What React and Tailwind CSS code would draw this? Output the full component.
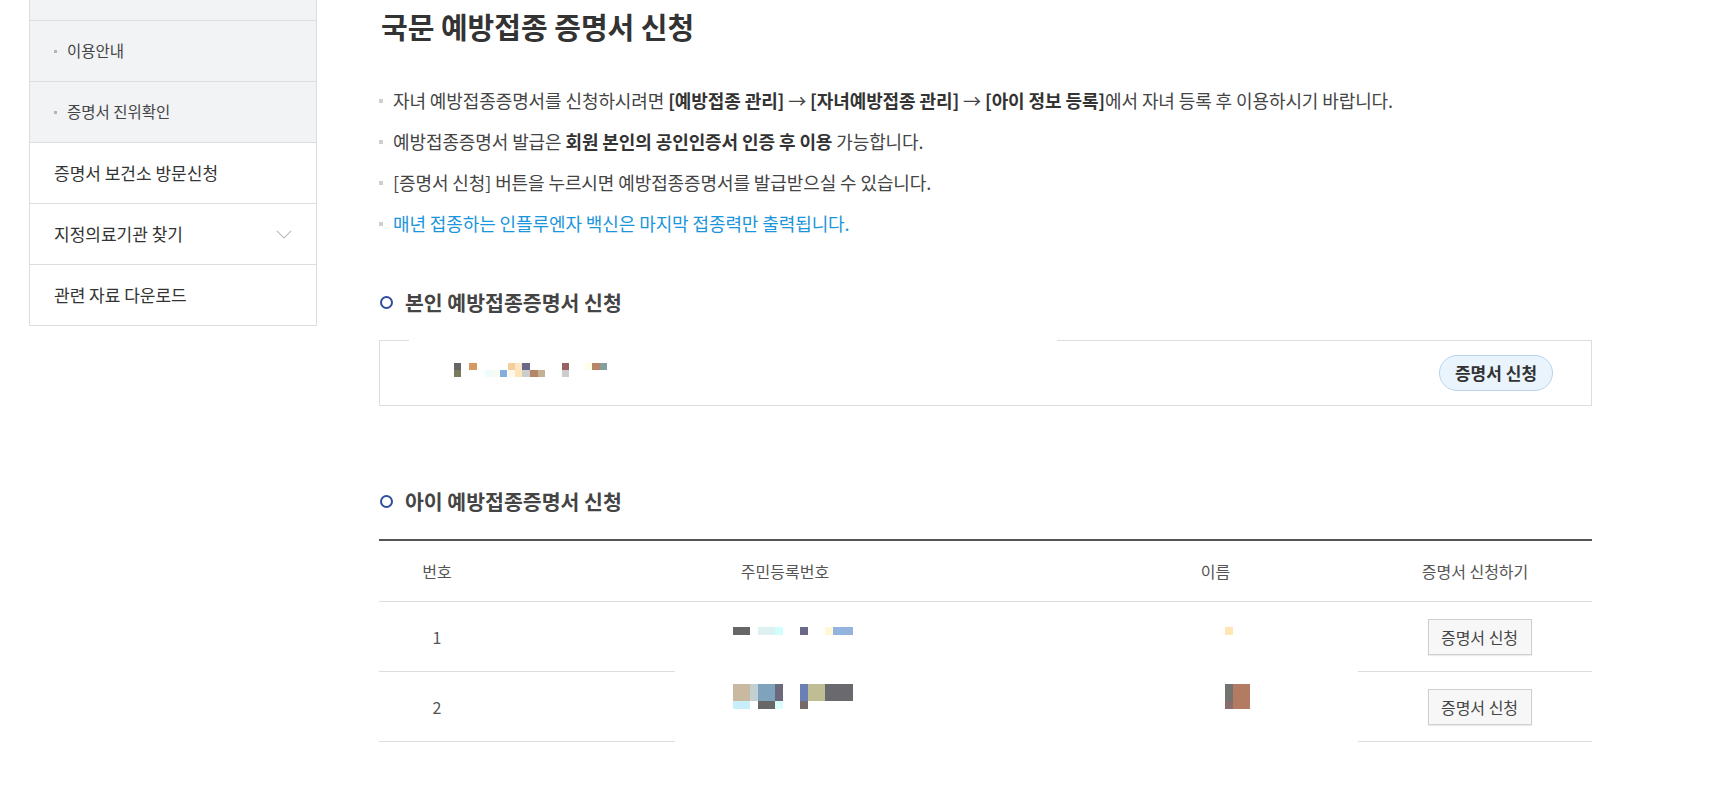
import React from 'react';

const boxCells = [
  [0, 0, 7, 7, '#666666'], [0, 7, 7, 7, '#7a7a5e'],
  [15.3, 0, 7.4, 7, '#d4995f'],
  [31, 7, 7.3, 7, '#effcfc'], [38.3, 7, 7, 7, '#f8fbf2'],
  [46, 7, 6.7, 7, '#84aedb'],
  [53.7, 0, 7, 7, '#f5cf9a'], [53.7, 7, 7, 7, '#fff6ee'],
  [60.7, 0, 7.6, 7, '#fde5c8'], [60.7, 7, 7.6, 7, '#fde5b8'],
  [68.3, 0, 7.7, 7, '#6a6a88'], [68.3, 7, 7.7, 7, '#cccccc'],
  [76, 7, 7.7, 7, '#b58668'], [83.7, 7, 7.6, 7, '#c2b294'],
  [107.7, 0, 7, 7, '#9a6363'], [107.7, 7, 7, 7, '#cccccc'],
  [131, 0, 7, 7, '#fffce8'], [138, 0, 7.7, 7, '#b58668'], [145.7, 0, 7, 7, '#859f9f'],
];

const row1Cells = [
  [0, 0, 17.3, 8, '#666666'], [25, 0, 17.3, 8, '#dff0f0'], [42.3, 0, 7.7, 8, '#d0fdfd'],
  [67.3, 0, 7.7, 8, '#6a6a88'], [92.3, 0, 7.7, 8, '#fff7d6'], [100, 0, 20, 8, '#93b4df'],
];

const row2Cells = [
  [0, 0, 17.3, 16.7, '#c9b9a0'], [17.3, 0, 7.7, 16.7, '#c2d0d3'], [25, 0, 17.3, 16.7, '#7fa2bd'],
  [42.3, 0, 7.7, 16.7, '#6a6a7c'], [67.3, 0, 7.7, 16.7, '#6a80b5'], [75, 0, 17.3, 16.7, '#bfbd94'],
  [92.3, 0, 27.7, 16.7, '#6a6a6e'],
  [0, 16.7, 17.3, 8.3, '#c8eefa'], [25, 16.7, 17.3, 8.3, '#676767'], [42.3, 16.7, 7.7, 8.3, '#dcfcfc'],
  [67.3, 16.7, 7.7, 8.3, '#766a6a'],
];

const name1Cells = [[0, 0, 7.7, 8, '#ffe6b3']];
const name2Cells = [
  [0, 0, 7.7, 16.7, '#75736f'], [0, 16.7, 7.7, 8.3, '#8a6e6e'], [7.7, 0, 17.3, 25, '#b47b63'],
];

function Mosaic({ cells, w, h }) {
  return (
    <svg width={w} height={h} viewBox={`0 0 ${w} ${h}`} shapeRendering="crispEdges" className="block">
      {cells.map(([x, y, cw, ch, c], i) => (
        <rect key={i} x={x} y={y} width={cw} height={ch} fill={c} />
      ))}
    </svg>
  );
}

function SubItem({ label }) {
  return (
    <div className="h-[61px] border-b border-[#dddddd] bg-[#f2f3f5] flex items-center pl-[24px]">
      <span className="w-[3px] h-[3px] bg-[#b5b5b5] mr-[10px]"></span>
      <span className="text-[15.5px] text-[#444]">{label}</span>
    </div>
  );
}

function MenuItem({ label, arrow }) {
  return (
    <div className="h-[61px] border-b border-[#dddddd] flex items-center justify-between pl-[24px] pr-[24px]">
      <span className="text-[17px] text-[#333]">{label}</span>
      {arrow && (
        <svg width="16" height="9" viewBox="0 0 16 9" fill="none">
          <polyline points="0.8,0.8 8,8 15.2,0.8" stroke="#bdbdbd" strokeWidth="1.2" />
        </svg>
      )}
    </div>
  );
}

function Bullet({ children, className = '' }) {
  return (
    <li className={`flex items-center ${className}`}>
      <span className="w-[4px] h-[4px] bg-[#cfcfcf] mr-[10px] shrink-0"></span>
      <span>{children}</span>
    </li>
  );
}

function SectionTitle({ children }) {
  return (
    <h3 className="flex items-center h-[30px] text-[20.5px] font-bold text-[#444]">
      <span className="w-[13px] h-[13px] rounded-full border-2 border-[#2c4e9c] mr-[12px] ml-[1px]"></span>
      {children}
    </h3>
  );
}

function SmallButton() {
  return (
    <button className="w-[104px] h-[36px] border border-[#cfcfcf] bg-[#f7f7f7] shadow-[0_1px_1px_rgba(0,0,0,0.08)] text-[16px] text-[#444]">
      증명서 신청
    </button>
  );
}

export default function App() {
  return (
    <div className="w-full min-h-[810px] bg-white flex font-['Noto_Sans_CJK_KR','Noto_Sans',sans-serif]">
      {/* 좌측 메뉴 */}
      <aside className="ml-[29px] w-[288px] shrink-0 self-start border-l border-r border-[#dddddd]">
        <div className="h-[21px] border-b border-[#dddddd] bg-[#f2f3f5]"></div>
        <SubItem label="이용안내" />
        <SubItem label="증명서 진위확인" />
        <MenuItem label="증명서 보건소 방문신청" />
        <MenuItem label="지정의료기관 찾기" arrow />
        <MenuItem label="관련 자료 다운로드" />
      </aside>

      <main className="ml-[62px] w-[1213px] shrink-0">
        <h2 className="mt-[8px] h-[36px] leading-[36px] text-[29px] font-bold text-[#333] pl-[2px]">
          국문 예방접종 증명서 신청
        </h2>

        <ul className="mt-[36px] text-[18px] leading-[41px] tracking-[-0.1px] text-[#444]">
          <Bullet>
            자녀 예방접종증명서를 신청하시려면 <b className="font-semibold text-[#333]">[예방접종 관리]</b> → <b className="font-semibold text-[#333]">[자녀예방접종 관리]</b> → <b className="font-semibold text-[#333]">[아이 정보 등록]</b>에서 자녀 등록 후 이용하시기 바랍니다.
          </Bullet>
          <Bullet>
            예방접종증명서 발급은 <b className="font-semibold text-[#333]">회원 본인의 공인인증서 인증 후 이용</b> 가능합니다.
          </Bullet>
          <Bullet>[증명서 신청] 버튼을 누르시면 예방접종증명서를 발급받으실 수 있습니다.</Bullet>
          <Bullet className="text-[#1b95dc]">매년 접종하는 인플루엔자 백신은 마지막 접종력만 출력됩니다.</Bullet>
        </ul>

        <div className="mt-[43px]">
          <SectionTitle>본인 예방접종증명서 신청</SectionTitle>
        </div>

        <div className="relative mt-[23px] h-[66px] border border-[#dddddd] flex items-center justify-between pl-[74px] pr-[38px]">
          <div className="absolute top-[-1px] left-[29px] w-[648px] h-[1px] bg-white"></div>
          <div className="-mt-[7px]">
            <Mosaic cells={boxCells} w={153} h={14} />
          </div>
          <button className="w-[114px] h-[36px] rounded-full border border-[#b9d3ec] bg-[#eaf4fd] text-[17px] font-semibold text-[#333]">
            증명서 신청
          </button>
        </div>

        <div className="mt-[80px]">
          <SectionTitle>아이 예방접종증명서 신청</SectionTitle>
        </div>

        <div className="mt-[23px] border-t-2 border-[#555555]">
          <div className="grid grid-cols-[116px_580px_281px_236px] h-[61px] border-b border-[#dddddd] items-center text-center text-[16px] text-[#555]">
            <div>번호</div>
            <div>주민등록번호</div>
            <div>이름</div>
            <div className="pl-[2px]">증명서 신청하기</div>
          </div>

          <div className="relative">
            <div className="absolute top-0 bottom-0 left-[296px] w-[683px] bg-white z-10"></div>

            <div className="grid grid-cols-[116px_580px_281px_236px] h-[70px] border-b border-[#dddddd] text-[16px] text-[#555]">
              <div className="flex items-center justify-center">1</div>
              <div className="relative z-20 pl-[238px] pt-[25px]">
                <Mosaic cells={row1Cells} w={120} h={8} />
              </div>
              <div className="relative z-20 pl-[150px] pt-[25px]">
                <Mosaic cells={name1Cells} w={8} h={8} />
              </div>
              <div className="flex items-center justify-center pl-[11px]">
                <SmallButton />
              </div>
            </div>

            <div className="grid grid-cols-[116px_580px_281px_236px] h-[70px] border-b border-[#dddddd] text-[16px] text-[#555]">
              <div className="flex items-center justify-center">2</div>
              <div className="relative z-20 pl-[238px] pt-[12px]">
                <Mosaic cells={row2Cells} w={120} h={25} />
              </div>
              <div className="relative z-20 pl-[150px] pt-[12px]">
                <Mosaic cells={name2Cells} w={25} h={25} />
              </div>
              <div className="flex items-center justify-center pl-[11px]">
                <SmallButton />
              </div>
            </div>
          </div>
        </div>
      </main>
    </div>
  );
}
